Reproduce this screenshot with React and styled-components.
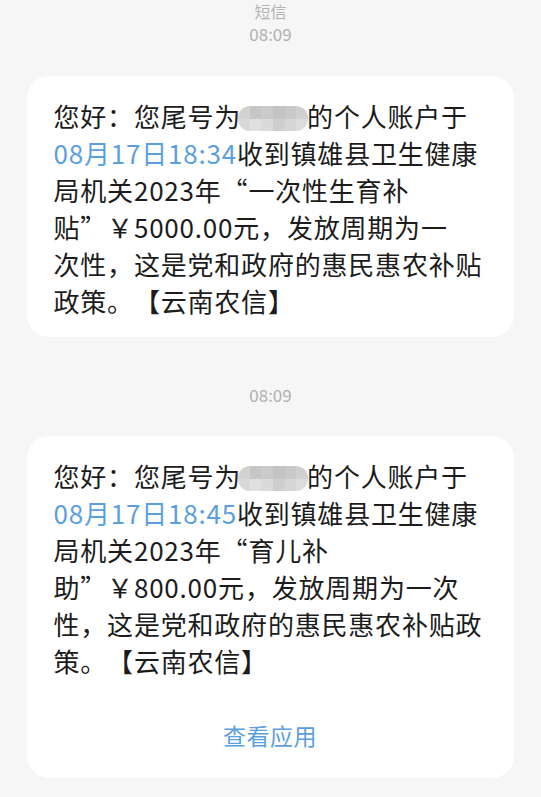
import React from 'react';
import styled, { createGlobalStyle } from 'styled-components';

const GlobalStyle = createGlobalStyle`
  html, body {
    margin: 0;
    padding: 0;
    background: #f6f6f6;
  }
  body {
    font-family: "Noto Sans CJK SC", "Noto Sans", sans-serif;
    text-spacing-trim: space-all;
  }
`;

const Page = styled.div`
  width: 541px;
  min-height: 797px;
  background: #f6f6f6;
  display: flex;
  flex-direction: column;
  align-items: center;
  overflow: hidden;
`;

const Header = styled.div`
  display: flex;
  flex-direction: column;
  align-items: center;
  color: #b4b4b4;
`;

const Title = styled.div`
  font-size: 16px;
  line-height: 22px;
`;

const Time = styled.div`
  font-size: 17px;
  line-height: 24px;
  color: #b0b0b0;
  margin-top: ${(p) => p.$top || 0}px;
  margin-bottom: ${(p) => p.$bottom || 0}px;
`;

const Card = styled.div`
  width: 487px;
  box-sizing: border-box;
  background: #ffffff;
  border-radius: 22px;
  padding: 21px 14px ${(p) => p.$bottom}px 27px;
  margin-left: -1px;
`;

const Body = styled.div`
  font-size: 26px;
  line-height: 37px;
  color: #1c1c1c;
  letter-spacing: 0.8px;
  text-spacing-trim: space-all;
`;

const Line = styled.div`
  height: 37px;
  white-space: nowrap;
`;

const Link = styled.span`
  color: #5b9fe0;
`;

const Mask = styled.span`
  display: inline-block;
  width: 70px;
  height: 25px;
  border-radius: 12px;
  overflow: hidden;
  vertical-align: -4px;
  margin: 0 -1px 0 -3px;
`;

const PixelGrid = styled.span`
  display: grid;
  grid-template-columns: repeat(6, 1fr);
  grid-template-rows: repeat(2, 1fr);
  width: 100%;
  height: 100%;
`;

const Pixel = styled.span`
  background: ${(p) => p.$c};
`;

const Action = styled.div`
  text-align: center;
  color: #5b9fe0;
  font-size: 23px;
  line-height: 30px;
  letter-spacing: 0.5px;
  margin-top: 41px;
  margin-left: -13px;
`;

const shades = [
  '#d2d2d2', '#c6c6c6', '#cbcbcb', '#c4c4c4', '#c9c9c9', '#d0d0d0',
  '#d8d8d8', '#e0e0e0', '#dadada', '#cfcfcf', '#d6d6d6', '#dcdcdc',
];

const Blur = () => (
  <Mask>
    <PixelGrid>
      {shades.map((c, i) => (
        <Pixel key={i} $c={c} />
      ))}
    </PixelGrid>
  </Mask>
);

const First = () => (
  <Line>
    您好：您尾号为<Blur />的个人账户于
  </Line>
);

export default function App() {
  return (
    <Page>
      <GlobalStyle />
      <Header>
        <Title>短信</Title>
        <Time $bottom={30}>08:09</Time>
      </Header>
      <Card $bottom={18}>
        <Body>
          <First />
          <Line><Link>08月17日18:34</Link>收到镇雄县卫生健康</Line>
          <Line>局机关2023年“一次性生育补</Line>
          <Line>贴”￥5000.00元，发放周期为一</Line>
          <Line>次性，这是党和政府的惠民惠农补贴</Line>
          <Line>政策。【云南农信】</Line>
        </Body>
      </Card>
      <Time $top={46} $bottom={29}>08:09</Time>
      <Card $bottom={28}>
        <Body>
          <First />
          <Line><Link>08月17日18:45</Link>收到镇雄县卫生健康</Line>
          <Line>局机关2023年“育儿补</Line>
          <Line>助”￥800.00元，发放周期为一次</Line>
          <Line>性，这是党和政府的惠民惠农补贴政</Line>
          <Line>策。【云南农信】</Line>
        </Body>
        <Action>查看应用</Action>
      </Card>
    </Page>
  );
}
